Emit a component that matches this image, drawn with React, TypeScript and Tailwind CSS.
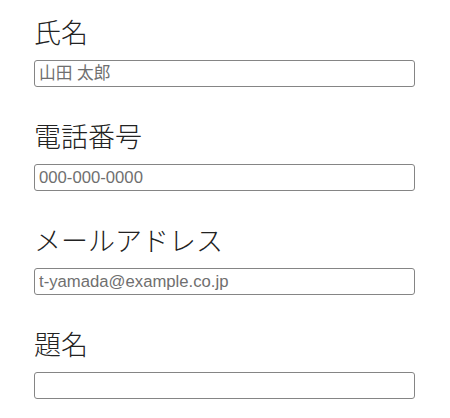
import React from 'react';

const fields = [
  { id: 'name', label: '氏名', type: 'text', placeholder: '山田 太郎' },
  { id: 'tel', label: '電話番号', type: 'tel', placeholder: '000-000-0000' },
  { id: 'email', label: 'メールアドレス', type: 'email', placeholder: 't-yamada@example.co.jp' },
  { id: 'subject', label: '題名', type: 'text', placeholder: '' },
];

export default function App() {
  return (
    <div className="min-h-screen bg-white text-black font-['Liberation_Sans','Noto_Sans_CJK_JP',sans-serif]">
      <form className="flex flex-col gap-[31px] pl-[34px] pt-[14px] w-[416px]">
        {fields.map((f) => (
          <div key={f.id} className="flex flex-col">
            <label
              htmlFor={f.id}
              className="block text-[27px] leading-[36px] mb-[10px] text-[#222] font-light font-['Noto_Sans_CJK_JP',sans-serif]"
            >
              {f.label}
            </label>
            <input
              id={f.id}
              type={f.type}
              placeholder={f.placeholder}
              className="block w-[381px] h-[27px] px-[4px] border border-[#858585] rounded-[3px] text-[16.7px] text-black placeholder:text-[#6f6f6f] outline-none"
            />
          </div>
        ))}
      </form>
    </div>
  );
}
